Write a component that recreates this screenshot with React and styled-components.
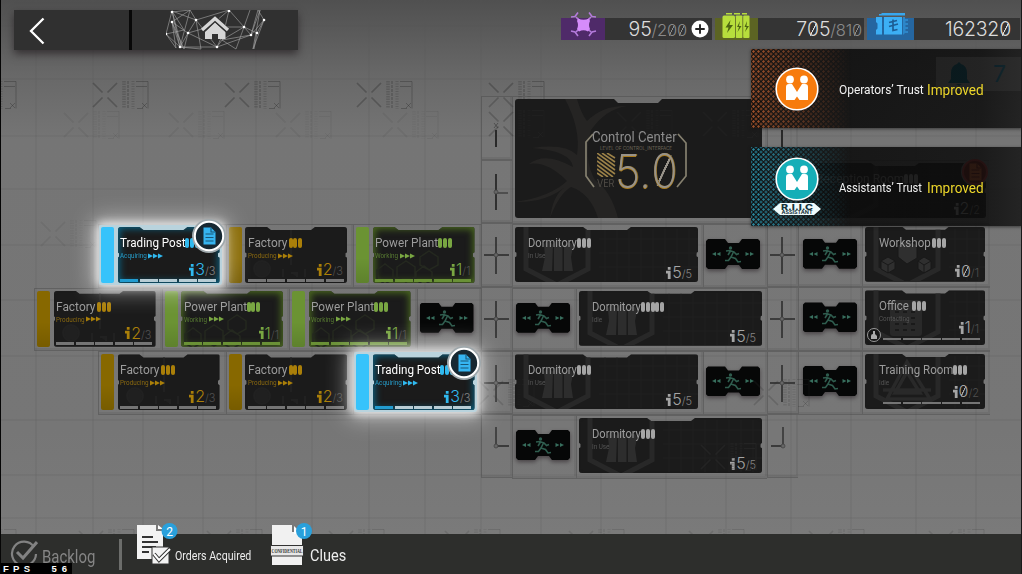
import React from "react";
import styled, { createGlobalStyle, css } from "styled-components";

const Global = createGlobalStyle`
  *{box-sizing:border-box}
  body{margin:0;background:#000;overflow:hidden;font-family:Roboto,"Liberation Sans",sans-serif}
`;

const Screen = styled.div`
  position: relative;
  width: 1022px;
  height: 574px;
  display: flex;
  flex-direction: column;
  overflow: hidden;
  border-left: 1px solid #050505;
  border-right: 1px solid #1a1a1a;
  background: linear-gradient(#505050 0, #686868 75px, #757575 140px, #767676 430px, #7a7a7a 534px);
`;

const Backdrop = styled.svg`
  position: absolute;
  top: 0;
  left: 0;
  pointer-events: none;
`;

const Fit = styled.span`
  display: inline-block;
  white-space: nowrap;
  transform: scaleX(${(p) => p.$k || 0.88});
  transform-origin: left center;
`;

const Slashed = styled.span`
  display: inline-block;
  line-height: inherit;
  background: linear-gradient(to bottom right, transparent calc(50% - ${(p) => p.$t}px), currentColor calc(50% - ${(p) => p.$t - 0.3}px), currentColor calc(50% + ${(p) => p.$t - 0.3}px), transparent calc(50% + ${(p) => p.$t}px)) 50% 50% / 56% 0.66em no-repeat;
`;
const Num = ({ v, t = 0.7 }) => String(v).split("").map((c, i) => (c === "0" ? <Slashed key={i} $t={t}>0</Slashed> : c));

/* ---------- header ---------- */
const Header = styled.header`
  position: relative;
  height: 95px;
  display: flex;
  justify-content: space-between;
  align-items: flex-start;
  flex: none;
`;
const NavPanel = styled.nav`
  margin: 10px 0 0 13px;
  width: 284px;
  height: 40px;
  display: flex;
  align-items: center;
  background: #303030;
  box-shadow: 0 4px 8px rgba(30, 25, 28, 0.65);
`;
const Back = styled.div`
  width: 118px;
  height: 40px;
  border-right: 3px solid #080808;
  svg { display: block; }
`;
const Home = styled.div`
  padding-left: 34px;
  height: 40px;
`;
const Resources = styled.div`
  display: flex;
  gap: 3px;
  margin: 10px 1px 0 0;
`;
const Resource = styled.div`
  display: flex;
  align-items: flex-end;
  height: 30px;
  width: ${(p) => p.$w}px;
`;
const ResIcon = styled.div`
  width: ${(p) => p.$w}px;
  flex: none;
  height: 30px;
  background: linear-gradient(transparent 8px, ${(p) => p.$bg} 8px);
  svg { display: block; }
`;
const ResValue = styled.div`
  flex: 1;
  height: 22px;
  background: #343434;
  display: flex;
  align-items: center;
  justify-content: flex-end;
  padding-right: ${(p) => p.$pr || 3}px;
  font: 300 19.5px/22px Inter, sans-serif;
  color: #dcdcdc;
  letter-spacing: -0.2px;
`;
const Small = styled.span`
  font-size: 16.5px;
  color: #898989;
  position: relative;
  top: 1px;
`;
const Plus = styled.svg`
  margin-left: 4px;
`;

/* ---------- base map ---------- */
const Base = styled.main`
  position: relative;
  flex: 1;
  display: flex;
  padding-left: 33px;
`;
const Wing = styled.section`
  width: ${(p) => p.$w}px;
  padding-top: ${(p) => p.$top || 0}px;
  flex: none;
`;
const Row = styled.div`
  display: flex;
  height: ${(p) => p.$h || 63.7}px;
  padding-left: ${(p) => p.$indent || 0}px;
`;
const line = "rgba(62,62,62,.38)";
const Cell = styled.div`
  flex: none;
  width: ${(p) => p.$w}px;
  height: 100%;
  border: 1px solid ${line};
  border-width: 1px 0 1px 1px;
  padding: 2px 0 0 ${(p) => p.$pl ?? 2}px;
  box-shadow: inset -2px -2px 0 rgba(70,70,70,.15);
  background: rgba(130, 130, 130, 0.1);
`;
const ShaftCell = styled(Cell)`
  padding: 0;
  width: 31px;
  height: 63.7px;
  svg { display: block; }
`;

const tones = {
  gold: { main: "#aa7f09", tab: "#876800", edge: "#1b1b1b" },
  green: { main: "#79a642", tab: "#6b9333", edge: "#4b6a20" },
  blue: { main: "#30b9ef", tab: "#37c3fb", edge: "#0c6180" },
  grey: { main: "#a5a5a5", tab: "#555", edge: "#1c1c1c" },
};
const RoomBox = styled.article`
  position: relative;
  width: ${(p) => p.$w}px;
  height: ${(p) => p.$h || 56}px;
  display: flex;
  gap: 3.5px;
  ${(p) => p.$lit && css`
    z-index: 2;
    &::before {
      content: "";
      position: absolute;
      inset: -2px;
      border-radius: 3px;
      background: #b9d3dd;
      box-shadow: 0 0 8px 3px rgba(255,255,255,.75), 0 0 22px 7px rgba(255,255,255,.45);
    }
  `}
`;
const Tab = styled.div`
  position: relative;
  width: 13px;
  border-radius: 2px;
  background: ${(p) => tones[p.$tone].tab};
  ${(p) => p.$tone !== "blue" && css`background-image: linear-gradient(transparent 55%, rgba(0,0,0,.12));`}
`;
const Body = styled.div`
  position: relative;
  flex: 1;
  display: flex;
  flex-direction: column;
  padding: ${(p) => p.$pad};
  background: #1b1b1b;
  border-radius: 3px;
  box-shadow: inset 0 0 ${(p) => (p.$tone === "green" || p.$tone === "blue" ? "7px 2px" : "3px 0")} ${(p) => tones[p.$tone].edge};
  clip-path: polygon(0 0, ${(p) => p.$n[0]}px 0, ${(p) => p.$n[0] + 4}px 3px, ${(p) => p.$n[1] - 4}px 3px, ${(p) => p.$n[1]}px 0, 100% 0, 100% 45%, calc(100% - 1.5px) 47%, calc(100% - 1.5px) 53%, 100% 55%, 100% 100%, 0 100%, 0 55%, 1.5px 53%, 1.5px 47%, 0 45%);
  overflow: hidden;
`;
const Art = styled.svg`
  position: absolute;
  left: 0;
  top: 0;
`;
const Title = styled.div`
  position: relative;
  flex: none;
  display: flex;
  align-items: center;
  height: 14px;
  margin-top: 9px;
  font-size: 13.4px;
  line-height: 14px;
  color: ${(p) => (p.$lit ? "#fff" : "#9c9c9c")};
`;
const Name = styled.div`
  width: ${(p) => p.$w}px;
  flex: none;
`;
const Pills = styled.div`
  display: flex;
  gap: 0.8px;
  i {
    width: 4px;
    height: 10px;
    border-radius: 2px;
    background: ${(p) => tones[p.$tone].main};
  }
`;
const Status = styled.div`
  position: relative;
  flex: none;
  display: flex;
  align-items: center;
  height: 11px;
  font-size: 7.5px;
  line-height: 11px;
  color: ${(p) => p.$c};
`;
const StatusText = styled.div`
  width: ${(p) => p.$w}px;
`;
const Count = styled.div`
  position: relative;
  flex: none;
  display: flex;
  align-items: baseline;
  justify-content: flex-end;
  margin-top: ${(p) => p.$mt}px;
  height: 15px;
  font: 300 16px/15px Inter, sans-serif;
  color: ${(p) => tones[p.$tone].main};
  small { font-size: 11px; color: ${(p) => (p.$dim ? "#505050" : "#858585")}; }
  svg { margin-right: 1px; align-self: center; }
`;
const Bars = styled.div`
  position: relative;
  flex: none;
  display: flex;
  gap: 1.5px;
  height: ${(p) => p.$h}px;
  margin-top: ${(p) => p.$mt}px;
  margin-right: -1px;
  padding-left: ${(p) => p.$pl || 0}px;
  i { flex: 1; background: ${(p) => p.$c}; }
  i:first-child { background: ${(p) => p.$first}; }
`;
const BadgeWrap = styled.svg`
  position: absolute;
  right: -7px;
  top: -9px;
  z-index: 3;
`;
const CorridorBox = styled.div`
  width: 54px;
  height: 30px;
  margin-top: 12px;
  background: #060707;
  border-radius: 2px;
  clip-path: polygon(2px 0, 19px 0, 22px 4px, 33px 4px, 36px 0, 52px 0, 54px 2px, 54px 28px, 52px 30px, 36px 30px, 33px 26px, 22px 26px, 19px 30px, 2px 30px, 0 28px, 0 2px);
  svg { display: block; }
`;
const Shadow = styled.div`
  filter: drop-shadow(0 2px 2px rgba(40, 32, 36, 0.6));
`;

const Center = styled.div`
  position: relative;
  width: 247px;
  height: 119px;
  background: #1b1b1b;
  border-radius: 3px;
  display: flex;
  flex-direction: column;
  align-items: flex-start;
  padding: 29px 0 0 77px;
  clip-path: polygon(0 0, 99px 0, 103px 4px, 143px 4px, 147px 0, 100% 0, 100% 100%, 0 100%);
`;
const CenterTitle = styled.div`
  position: relative;
  font-size: 15.5px;
  line-height: 18px;
  height: 18px;
  color: #8d8d8d;
`;
const CenterSub = styled.div`
  position: relative;
  margin-left: 8px;
  height: 6px;
  font: 4.6px/6px Inter, sans-serif;
  color: #6b6557;
`;
const Version = styled.div`
  position: relative;
  display: flex;
  margin-left: 5px;
`;
const Ver = styled.div`
  width: 18px;
  padding-top: 10px;
  font: 10px/12px Inter, sans-serif;
  color: #514d47;
  svg { display: block; margin-top: -9px; }
`;
const Big = styled.div`
  font: 200 47px/37px Inter, sans-serif;
  color: #98938a;
  text-shadow: 0 1px 0 #a97b1c, 1px 0 0 #8a681f;
`;

/* ---------- notices ---------- */
const Notices = styled.aside`
  position: absolute;
  z-index: 5;
  left: 750px;
  top: 49px;
  width: 271px;
  display: flex;
  flex-direction: column;
  gap: 19px;
`;
const Notice = styled.div`
  position: relative;
  height: 79px;
  display: flex;
  align-items: center;
  background: linear-gradient(90deg, rgba(14,14,14,.93), rgba(12,12,12,.88) 55%, rgba(12,12,12,.86) 85%, rgba(25,25,25,.88));
  font-size: 12.7px;
  color: #f1f1f1;
  box-shadow: 0 1px 3px rgba(20,20,20,.6);
  &::before {
    content: "";
    position: absolute;
    inset: 0 auto 0 0;
    width: 100px;
    background-image: radial-gradient(circle, ${(p) => p.$c} 0.9px, transparent 1.5px), radial-gradient(circle, ${(p) => p.$c} 0.9px, transparent 1.5px);
    background-size: 5px 5px;
    background-position: 0 0, 2.5px 2.5px;
    mask-image: linear-gradient(90deg, #000, transparent);
  }
`;
const Emblem = styled.svg`
  position: relative;
  flex: none;
  align-self: flex-start;
  margin: 0 17px 0 21px;
`;
const Message = styled.div`
  position: relative;
  width: 88px;
  padding-top: 2px;
`;
const Gain = styled.div`
  position: relative;
  font-size: 14.3px;
  padding-top: 2px;
  color: #ecd62a;
`;
const Alerts = styled.div`
  position: absolute;
  left: 935px;
  top: 57px;
  width: 85px;
  height: 34px;
  display: flex;
  align-items: center;
  gap: 23px;
  padding-left: 12px;
  background: #b4b4b4;
  color: #0090c4;
  font: 400 23px Inter, sans-serif;
`;

/* ---------- footer ---------- */
const Footer = styled.footer`
  position: relative;
  flex: none;
  height: 40px;
  background: #2d2e2c;
  display: flex;
  color: #ededed;
`;
const Backlog = styled.div`
  width: 110px;
  height: 40px;
  padding: 4px 0 0 9px;
  display: flex;
  align-items: center;
  gap: 4px;
  font-size: 18px;
  color: #858585;
  svg { margin-top: -6px; }
`;
const Divider = styled.div`
  width: 3px;
  height: 31px;
  margin: 5px 13px 0 8px;
  background: #6c6d6b;
`;
const Entry = styled.div`
  display: flex;
  width: ${(p) => p.$w}px;
  height: 56px;
  margin-top: -14px;
  font-size: ${(p) => p.$fs}px;
  span { margin-top: 26px; line-height: 20px; }
  svg { overflow: visible; flex: none; }
`;
const Fps = styled.div`
  position: absolute;
  left: 0;
  bottom: 0;
  width: 71px;
  height: 11px;
  background: #000;
  color: #fff;
  font: bold 9.5px/12px "Liberation Sans", sans-serif;
  display: flex;
  padding-left: 2px;
  gap: 17px;
  letter-spacing: 4.3px;
  b:last-child { letter-spacing: 5px; }
`;

/* ---------- drawings ---------- */
const Mark = ({ x, y, o = 0.3 }) => (
  <g transform={`translate(${x} ${y})`} stroke="#2c2c2c" strokeOpacity={o} fill="none">
    <path d="M-12-12L-2.500-2.500M12-12L2.500-2.500M-12 12L-2.500 2.500M12 12L2.500 2.500" strokeWidth="1.700" />
    <g strokeOpacity={o * 0.65}>
      <path d="M19-14v27" strokeWidth="3.500" strokeDasharray="1.500 1" />
      <path d="M23-14v28" strokeWidth="2" strokeDasharray="3 1" />
      <path d="M28-14v28" strokeWidth="3" strokeDasharray="1 1.500" />
    </g>
    <path d="M31-13.500h12v27M31-8.500h11M32 13.500h6M37 8l5 5M42 8l-5 5" />
  </g>
);
const Ground = () => (
  <Backdrop width="1020" height="574">
    <g stroke="#555" strokeOpacity=".28">
      {[35, 92, 142, 202, 255, 311, 368, 424, 480, 540, 600, 665, 725, 790, 850, 915, 975].map((x) => <path key={x} d={`M${x} 0V574`} />)}
      {[26, 79, 136, 189, 245, 300, 356, 420, 475, 518].map((y) => <path key={y} d={`M0 ${y}H1020`} />)}
    </g>
    {[-28, 104, 236, 368, 500].map((x) => <Mark key={x} x={x} y={95} o={0.36} />)}
    {[75, 180, 287, 394].map((x) => <Mark key={x} x={x} y={125} o={0.08} />)}
    {[-28, 90, 218, 340, 456, 580, 700, 820, 940].map((x) => <Mark key={x} x={x} y={543} o={0.16} />)}
    <Mark x={52} y={234} o={0.08} />
  </Backdrop>
);
const Overlay = () => (
  <Backdrop width="1020" height="574">
    {[500, 628, 714].map((x) => <Mark key={x} x={x} y={124} o={0.3} />)}
    {[490, 765].map((x) => <Mark key={x} x={x} y={393} o={0.22} />)}
    <Mark x={712} y={457} o={0.5} />
  </Backdrop>
);

const Web = () => (
  <svg width="102" height="40" viewBox="0 0 102 40">
    <g fill="none" stroke="#a8a8a8" strokeWidth=".6">
      <path d="M6 1L0 24L14 37L22 23L30 10L24 0L6 12L14 37L6 1L30 10L63 0L78 17L85 25L98 10L92 0L85 25L51 37L22 23L6 12L10 38L0 24M6 2L24 0L14 37L35 39L30 10L51 37L56 30L85 25L94 0L87 39L98 10L91 23L78 17L84 0M63 0L56 30L70 39L78 17L56 30M14 37L51 37L60 17L78 17M6 12L18 39L22 23L43 17L63 0M91 23L88 39M0 24L18 20L6 1L16 38" />
    </g>
    <g fill="#fff">{[[6, 2], [30, 10], [0, 24], [14, 37], [22, 23], [51, 37], [63, 1], [78, 17], [85, 25], [98, 10], [91, 23], [6, 12]].map(([x, y]) => <circle key={x + "-" + y} cx={x} cy={y} r="1.3" />)}</g>
    <path d="M37 20L49 8L61 20" fill="none" stroke="#303030" strokeWidth="5" />
    <path d="M39 22L49 12.5L59.500 22V29H52V24H46V29H39Z" fill="#d6d6d6" />
    <path d="M36.500 20.500L49 9L61.500 20.500" fill="none" stroke="#303030" strokeWidth="5" />
    <path d="M36 20L49 8.500L62 20" fill="none" stroke="#d6d6d6" strokeWidth="3.400" />
  </svg>
);
const Drone = () => (
  <svg width="44" height="30" viewBox="0 0 44 30">
    <g fill="none" stroke="#b57bdc" strokeWidth="1.600">
      <path d="M15 7L30 22M30 7L15 22" />
      <path d="M10 7L14 6.500L17 2.500M28 2.500L31 6.500L35 7M10 21L14 22L17 26M35 21L31 22L28 26" />
    </g>
    <path d="M17 8.500Q22.500 11 28 8.500L29 11Q27 15 29 19L27 21.500Q22.500 19 18 21.500L16 19Q18 15 16 11Z" fill="#d58cfa" />
  </svg>
);
const Battery = () => (
  <svg width="43" height="30" viewBox="0 0 43 30">
    <g fill="#b7de3c">
      <rect x="11" y="3" width="6" height="1.500" /><rect x="19" y="3" width="6" height="1.500" /><rect x="27" y="3" width="5" height="1.500" />
      <rect x="7.500" y="5.500" width="12.500" height="22.500" rx="1.500" /><rect x="20.800" y="5.500" width="6.600" height="22.500" rx=".8" /><rect x="28.200" y="5.500" width="6.300" height="22.500" rx="1" />
    </g>
    <path d="M15.500 10L10.500 17.500H13.500L12 23L18 15H14.500ZM25 11L22 17H24L22.500 22L26.500 16H24ZM32 11L29.500 17H31.500L30 22L34 16H31.500Z" fill="#4d6512" />
  </svg>
);
const Orders = () => (
  <svg width="47" height="30" viewBox="0 0 47 30">
    <path d="M12 5.500V4H14.500V3H38V5.500Z" fill="#38a7ee" />
    <path d="M36 7H38V9H41V11H38.500V13H41V15H38.500V17H41V19H38.500V21H41V23H38L36 25Z" fill="#2c86c9" />
    <path d="M9 7H15V24.500H9V20L10.500 18.500V13.500L9 12ZM17 7H35V24.500H17Z" fill="#3caff5" />
    <path d="M16 7V25" stroke="#2065a0" strokeWidth="1.500" strokeDasharray="2 1.500" />
    <path d="M22 12.500L30 10.500M22 16.500L31 14M26 9.500V20.500L30.500 19.500" fill="none" stroke="#1d5d95" strokeWidth="1.700" />
  </svg>
);
const Person = ({ c }) => (
  <svg width="5" height="12" viewBox="0 0 5 12"><path d="M1.800 0H4.600V2.800H1.800ZM0 3.800H4.600V12H1.800V6.600H0Z" fill={c} /></svg>
);
const Runner = () => (
  <svg width="54" height="30" viewBox="0 0 54 30">
    <path d="M6 15L10 13V17ZM10.500 15L14.500 13V17ZM48 15L44 13V17ZM43.500 15L39.500 13V17Z" fill="#376e5d" />
    <circle cx="24.500" cy="9" r="1.700" fill="#2f5c4e" />
    <path d="M20 12L23.500 11.500L28 13L30.500 15.500L33 14.500M27.500 13L25 18L29.500 19.500L32 23L35 22.500M25 18L22.500 21.500L19 21.500M24.500 12L22 16" fill="none" stroke="#2f5c4e" strokeWidth="1.600" />
  </svg>
);
const Corridor = () => <Shadow><CorridorBox><Runner /></CorridorBox></Shadow>;

const Cross = ({ kind = "full" }) => (
  <svg width="30" height="62" viewBox="1 0 30 62" fill="none" stroke="#292929">
    {kind === "top" && <><path d="M15 33V50" strokeWidth="2" /><path d="M13 26L17 31M17 26L13 31" strokeOpacity=".5" /></>}
    {kind === "tee" && <><path d="M15 13V49" strokeWidth="1.800" /><path d="M15 32H27" /></>}
    {kind === "full" && <><path d="M15 13V50" strokeWidth="1.500" /><path d="M3 31H28" strokeWidth="1.500" /></>}
    {kind === "right" && <path d="M15 12V31H28" strokeWidth="1.300" />}
    {kind === "left" && <path d="M16 12V31H4" strokeWidth="1.300" />}
    {kind !== "top" && <circle cx={kind === "left" ? 16 : 15} cy="31" r="2" fill="#666" stroke="#444" strokeWidth=".8" />}
  </svg>
);
const Arrows = ({ c }) => (
  <svg width="15" height="6" viewBox="0 0 15 6"><path d="M0 .5L5 3L0 5.500ZM5 .5L10 3L5 5.500ZM10 .5L15 3L10 5.500Z" fill={c} /></svg>
);
const OrderBadge = ({ red }) => (
  <BadgeWrap width="36" height="36" viewBox="0 0 36 36">
    <circle cx="18" cy="18" r={red ? 14 : 17} fill={red ? "#777" : "#9fa8ac"} />
    <circle cx="18" cy="18" r={red ? 12 : 14.2} fill={red ? "#7a1b12" : "#172832"} stroke={red ? "#b33" : "#fff"} strokeWidth="2" />
    <path d="M12.500 9.500H20L24.500 14V26.500H12.500Z" fill={red ? "#e0602c" : "#36b5f1"} />
    <path d="M20 9.500V14H24.500M14.500 16H22.500M14.500 19.500H22.500M14.500 23H22.500" stroke={red ? "#7a1b12" : "#175777"} strokeWidth="1.100" fill="none" />
  </BadgeWrap>
);

const hex = "M11 -8L42 -22L73 -8V42L42 58L11 42Z";
const Emblems = {
  dorm: <path d="M29 18Q32 10 38 18L37 44H27L30 30ZM39 17Q43 8 47.500 17V44H39ZM49 18Q56 12 58 20L56 30L58 44H49Z" fill="#2d2d2d" />,
  workshop: <path d="M33 30V18L42 13L52 18V31L42 37ZM16 34L23 30L30 34V42L23 46L16 42ZM53 34L59 30L66 34V42L59 46L53 42ZM16 34L23 38V46M23 38L30 34M53 34L59 38V46M59 38L66 34" fill="#2f2f2f" stroke="#191919" />,
  office: <><rect x="25" y="10" width="32" height="36" rx="3" fill="#292929" /><path d="M30 22H54M30 28H54M30 34H54M30 40H54" stroke="#1a1a1a" strokeWidth="2" strokeDasharray="4 4" /></>,
  training: <path d="M42 8L65 45H22ZM42 18L55 39H30ZM18 36H66" fill="none" stroke="#292929" strokeWidth="3.500" />,
  factory: <path d="M9 42a8 8 0 0 1 16 0 8 8 0 0 1-16 0M46 2V38M38 42V50M46 46H52V50M60 42V50" fill="#202020" stroke="#212121" strokeWidth="2" />,
  plant: <path d="M4 43l8-6 8 6v9l-8 5-8-5ZM24 40l9-6 9 6v10l-9 5-9-5ZM43 45l8-6 8 6v8l-8 5-8-5ZM47 30l9-6 9 6v8l-9 5-9-5Z" fill="none" stroke="#24281f" strokeWidth="1.500" />,
};

const Room = ({ name, nw, k, status, sw = 28, cur, max, tone = "grey", w, tab, pills = 3, bars, lit, art, h = 56, officer, red }) => {
  const width = w || (tab ? 118.5 : 120);
  const wide = width > 150;
  const t = tones[tone];
  const dark = tone === "grey";
  const notch = wide ? [68, 116] : tab ? [22, 70] : [37, 84];
  const countTop = tab ? 1 : wide ? 4 : bars ? -4 : 3;
  const pad = tab ? "0 4px 2px 2.5px" : wide ? "0 6px 2px 13px" : "0 6px 2px 14px";
  const barTone = tone === "green" ? "#6a9136" : lit ? "#b8cdd5" : "#757575";
  return (
    <RoomBox $w={width} $h={h} $lit={lit}>
      {tab && <Tab $tone={tone} />}
      <Body $pad={pad} $tone={tone} $n={notch}>
        <Art width={wide ? 183 : 120} height="56" viewBox={`0 0 ${wide ? 183 : 120} 56`}>
          {!tab && <path d={hex} fill="none" stroke="#282828" strokeWidth="5" />}
          {dark && <path d="M90 2V54M102 2V54M114 2V54M126 2V54M138 2V54M150 2V54M162 2V54M174 2V54M84 12H183M84 26H183M84 40H183" stroke="#202020" />}
          {art && Emblems[art]}
          {officer && <><circle cx="9" cy="45" r="6.500" fill="#161616" stroke="#999" /><path d="M6 49V46Q6 44 8 44V41H10V44L12 46V49Z" fill="#aaa" /></>}
        </Art>
        <Title $lit={lit}>
          <Name $w={nw}><Fit $k={k}>{name}</Fit></Name>
          <Pills $tone={tone}>{Array.from({ length: pills }, (_, i) => <i key={i} />)}</Pills>
        </Title>
        <Status $c={dark ? "#555" : lit ? "#269cc9" : tone === "green" ? "#587b32" : "#8a6910"}>
          <StatusText $w={sw}><Fit $k={0.84}>{status}</Fit></StatusText>
          {!dark && <Arrows c={t.main} />}
        </Status>
        <Count $tone={tone} $dim={!wide && !lit} $mt={countTop}>
          <Person c={t.main} /><Num v={cur} /><small>/{max}</small>
        </Count>
        {bars && <Bars $pl={dark ? 4 : 0} $h={dark ? 2 : 3} $mt={dark ? 3 : 1.5} $c={barTone} $first={lit ? "#229cd0" : barTone}>
          <i /><i /><i /><i /><i />
        </Bars>}
      </Body>
      {(lit || red) && <OrderBadge red={red} />}
    </RoomBox>
  );
};
const Factory = () => <Room name="Factory" nw={41} k={0.89} status="Producing" sw={30} cur="2" max="3" tone="gold" tab bars art="factory" />;
const Plant = () => <Room name="Power Plant" nw={63} k={0.88} status="Working" sw={25} cur="1" max="1" tone="green" tab bars art="plant" />;
const Trading = () => <Room name="Trading Post" nw={65} k={0.87} status="Acquiring" sw={28} cur="3" max="3" tone="blue" tab bars lit />;
const Dorm = ({ pills = 3, status = "In Use" }) => <Room name="Dormitory" nw={49} k={0.83} status={status} cur="5" max="5" w={183} h={55} pills={pills} art="dorm" />;

const Pair = () => (
  <g fill="#fff">
    <circle cx="-7" cy="-9.500" r="3.900" /><circle cx="7" cy="-9.500" r="3.900" />
    <path d="M-11 11V-2Q-11-5-8-5H-5L0 3L5-5H8Q11-5 11-2V11H2.500L0 7.500L-2.500 11Z" />
  </g>
);

export default function App() {
  return (
    <Screen>
      <Global />
      <Ground />
      <Header>
        <NavPanel>
          <Back><svg width="113" height="40"><path d="M29.500 8.500L17 21L29.500 33.500" fill="none" stroke="#fff" strokeWidth="2.300" /></svg></Back>
          <Home><Web /></Home>
        </NavPanel>
        <Resources>
          <Resource $w={151}>
            <ResIcon $w={44} $bg="#4f2a69"><Drone /></ResIcon>
            <ResValue>95<Small>/2<Num v="00" t={0.6} /></Small>
              <Plus width="18" height="18" viewBox="0 0 19 19"><circle cx="9.500" cy="9.500" r="9" fill="#fff" /><path d="M4.500 9.500H14.500M9.500 4.500V14.500" stroke="#222" strokeWidth="2" /></Plus>
            </ResValue>
          </Resource>
          <Resource $w={149}>
            <ResIcon $w={43} $bg="#5c6423"><Battery /></ResIcon>
            <ResValue $pr={2}><Num v="705" /><Small>/<Num v="810" t={0.6} /></Small></ResValue>
          </Resource>
          <Resource $w={153}>
            <ResIcon $w={47} $bg="#2566a0"><Orders /></ResIcon>
            <ResValue $pr={9}><Num v="162320" /></ResValue>
          </Resource>
        </Resources>
      </Header>

      <Base>
        <Wing $w={447} $top={129}>
          <Row $indent={64}>
            <Cell $w={127.5}><Trading /></Cell>
            <Cell $w={127.5}><Factory /></Cell>
            <Cell $w={127.5}><Plant /></Cell>
          </Row>
          <Row>
            <Cell $w={127.5}><Factory /></Cell>
            <Cell $w={127.5}><Plant /></Cell>
            <Cell $w={127.5}><Plant /></Cell>
            <Cell $w={64}><Corridor /></Cell>
          </Row>
          <Row $indent={64}>
            <Cell $w={127.5}><Factory /></Cell>
            <Cell $w={127.5}><Factory /></Cell>
            <Cell $w={127.5}><Trading /></Cell>
          </Row>
        </Wing>

        <Wing $w={31} $top={1}>
          <ShaftCell><Cross kind="top" /></ShaftCell>
          <ShaftCell><Cross kind="tee" /></ShaftCell>
          <ShaftCell><Cross /></ShaftCell>
          <ShaftCell><Cross /></ShaftCell>
          <ShaftCell><Cross /></ShaftCell>
          <ShaftCell><Cross kind="right" /></ShaftCell>
        </Wing>

        <Wing $w={255} $top={1}>
          <Row $h={128}>
            <Cell $w={255}>
              <Center>
                <Art width="247" height="119" viewBox="0 0 247 119">
                  <path d="M50 0L62 0Q66 14 72 22Q88 6 112 7Q91 10 76 31Q68 60 80 81Q96 92 103 119H83Q75 94 56 88Q44 95 35 119Q38 96 50 88Q30 104 0 103Q35 98 52 82Q32 62 14 65Q30 52 58 68Q56 52 17 49Q50 44 62 56Q66 30 50 0Z" fill="#252423" />
                  <path d="M78 35L71 43V77L79 88M163 35L171 44V77L162 88" fill="none" stroke="#85806f" strokeWidth="1.700" />
                </Art>
                <CenterTitle><Fit $k={0.85}>Control Center</Fit></CenterTitle>
                <CenterSub>LEVEL OF CONTROL_INTERFACE</CenterSub>
                <Version>
                  <Ver>
                    <svg width="19" height="24" viewBox="0 0 19 24"><path d="M0 0L18 13M0 4L18 17M0 8L18 21M0 12L16 24M0 16L11 24M0 20L6 24M5 0L18 9M10 0L18 5" stroke="#9b8148" strokeWidth="1.600" /></svg>
                    <Fit $k={0.9}>VER</Fit>
                  </Ver>
                  <Big><Fit $k={0.93}>5.<Num v="0" t={1.3} /></Fit></Big>
                </Version>
              </Center>
            </Cell>
          </Row>
          <Row><Cell $w={191}><Dorm /></Cell><Cell $w={64}><Corridor /></Cell></Row>
          <Row><Cell $w={64} $pl={3}><Corridor /></Cell><Cell $w={191}><Dorm pills={5} status="Idle" /></Cell></Row>
          <Row><Cell $w={191}><Dorm /></Cell><Cell $w={64}><Corridor /></Cell></Row>
          <Row><Cell $w={64} $pl={3}><Corridor /></Cell><Cell $w={191}><Dorm /></Cell></Row>
        </Wing>

        <Wing $w={31} $top={1}>
          <ShaftCell><Cross kind="top" /></ShaftCell>
          <ShaftCell><Cross /></ShaftCell>
          <ShaftCell><Cross /></ShaftCell>
          <ShaftCell><Cross /></ShaftCell>
          <ShaftCell><Cross /></ShaftCell>
          <ShaftCell><Cross kind="left" /></ShaftCell>
        </Wing>

        <Wing $w={192} $top={65}>
          <Row><Cell $w={191} $pl={4}><Room name="Reception Room" nw={88} k={0.9} cur="2" max="2" w={183} h={55} red /></Cell></Row>
          <Row><Cell $w={64} $pl={4}><Corridor /></Cell><Cell $w={128}><Room name="Workshop" nw={53} k={0.86} cur="0" max="1" h={55} art="workshop" /></Cell></Row>
          <Row><Cell $w={64} $pl={4}><Corridor /></Cell><Cell $w={128}><Room name="Office" nw={33} k={0.86} status="Contacting" cur="1" max="1" h={55} art="office" bars officer /></Cell></Row>
          <Row><Cell $w={64} $pl={4}><Corridor /></Cell><Cell $w={128}><Room name="Training Room" nw={74} k={0.86} status="Idle" cur="0" max="2" h={55} art="training" bars /></Cell></Row>
        </Wing>
      </Base>
      <Overlay />

      <Alerts>
        <svg width="22" height="24" viewBox="0 0 22 24"><path d="M11 0L13 2Q19 4 19 11V17L22 21H0L3 17V11Q3 4 9 2ZM8 22H14L11 24Z" fill="#00708e" /></svg>7
      </Alerts>
      <Notices>
        <Notice $c="#a0522b">
          <Emblem width="50" height="79" viewBox="-25 -40 50 79">
            <circle r="20.800" fill="#f77b0d" stroke="#fff" strokeWidth="1.600" /><Pair />
          </Emblem>
          <Message><Fit $k={0.94}>Operators’ Trust</Fit></Message>
          <Gain><Fit $k={0.95}>Improved</Fit></Gain>
        </Notice>
        <Notice $c="#2a8ba2">
          <Emblem width="50" height="79" viewBox="-25 -32 50 79">
            <circle r="20.800" fill="#15aeb7" stroke="#fff" strokeWidth="1.600" /><Pair />
            <path d="M-24 30L-17 24H17L24 30L17 36H-17Z" fill="#effbfc" />
            <text x="0" y="30.500" textAnchor="middle" fontSize="8" fontWeight="800" fontFamily="Inter,sans-serif" fill="#17343c" textLength="32" lengthAdjust="spacingAndGlyphs">R.I.I.C</text>
            <text x="0" y="35.300" textAnchor="middle" fontSize="4.500" fontWeight="700" fontFamily="Inter,sans-serif" fill="#17343c" textLength="31" lengthAdjust="spacingAndGlyphs">ASSISTANT</text>
          </Emblem>
          <Message><Fit $k={0.88}>Assistants’ Trust</Fit></Message>
          <Gain><Fit $k={0.95}>Improved</Fit></Gain>
        </Notice>
      </Notices>

      <Footer>
        <Backlog>
          <svg width="28" height="28" viewBox="0 0 28 28" fill="none" stroke="#828282"><path d="M24 8A12 12 0 1 0 26 15" strokeWidth="2.200" /><path d="M7 13L13 19L27 3" strokeWidth="3" /></svg>
          <Fit $k={0.83}>Backlog</Fit>
        </Backlog>
        <Divider />
        <Entry $w={134} $fs={12.5}>
          <svg width="40" height="48" viewBox="0 0 40 48">
            <path d="M2 5H21V11H28V39H2Z" fill="#f3f3f3" /><path d="M23 5V9H28Z" fill="#fff" />
            <path d="M7 17H18M7 22H23M7 27H21M7 32H14" stroke="#333" strokeWidth="2" />
            <rect x="17" y="27" width="17" height="17" fill="#f3f3f3" stroke="#333" /><path d="M19 34L24 40L35 29" fill="none" stroke="#333" strokeWidth="4" /><path d="M19 34L24 40L35 29" fill="none" stroke="#fff" strokeWidth="2" />
            <circle cx="34.500" cy="11" r="8" fill="#29a0dc" />
            <text x="34.500" y="15.500" textAnchor="middle" fontSize="12" fill="#fff" fontFamily="Roboto">2</text>
          </svg>
          <Fit $k={0.85}>Orders Acquired</Fit>
        </Entry>
        <Entry $w={90} $fs={16.5}>
          <svg width="41" height="48" viewBox="0 0 41 48">
            <path d="M3 5H23V12H33V45H3Z" fill="#f1f1f1" /><path d="M25 6V14H33Z" fill="#fff" />
            <rect x="1.500" y="25.500" width="33" height="10.500" fill="#e8e8e8" stroke="#333" />
            <text x="18" y="33.200" textAnchor="middle" fontSize="7" fontWeight="700" fontFamily="Liberation Serif,serif" fill="#333" textLength="31" lengthAdjust="spacingAndGlyphs">CONFIDENTIAL</text>
            <circle cx="35" cy="11" r="8" fill="#29a0dc" />
            <text x="35" y="15.500" textAnchor="middle" fontSize="12" fill="#fff" fontFamily="Roboto">1</text>
          </svg>
          <Fit $k={0.88}>Clues</Fit>
        </Entry>
        <Fps><b>FPS</b><b>56</b></Fps>
      </Footer>
    </Screen>
  );
}
